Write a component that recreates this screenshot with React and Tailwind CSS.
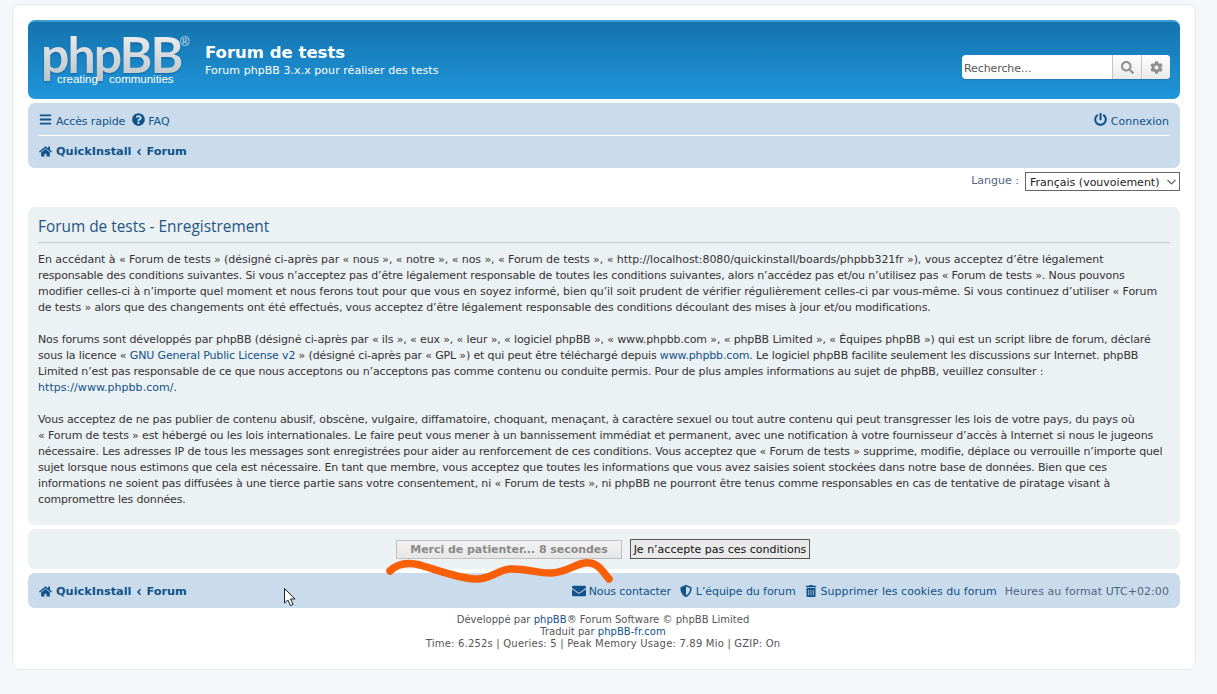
import React from "react";
import { FaBars, FaQuestionCircle, FaHome, FaPowerOff, FaSearch, FaCog, FaEnvelope, FaShieldAlt, FaTrashAlt, FaAngleLeft } from "react-icons/fa";

const P1 = [
  ["En accédant à « Forum de tests » (désigné ci-après par « nous », « notre », « nos », « Forum de tests », « http://localhost:8080/quickinstall/boards/phpbb321fr »), vous acceptez d’être légalement", "tracking-[-0.0625px]"],
  ["responsable des conditions suivantes. Si vous n’acceptez pas d’être légalement responsable de toutes les conditions suivantes, alors n’accédez pas et/ou n’utilisez pas « Forum de tests ». Nous pouvons", "tracking-[-0.15px]"],
  ["modifier celles-ci à n’importe quel moment et nous ferons tout pour que vous en soyez informé, bien qu’il soit prudent de vérifier régulièrement celles-ci par vous-même. Si vous continuez d’utiliser « Forum", "tracking-[-0.09px]"],
  ["de tests » alors que des changements ont été effectués, vous acceptez d’être légalement responsable des conditions découlant des mises à jour et/ou modifications.", "tracking-[-0.127px]"],
];
const P3 = [
  ["Vous acceptez de ne pas publier de contenu abusif, obscène, vulgaire, diffamatoire, choquant, menaçant, à caractère sexuel ou tout autre contenu qui peut transgresser les lois de votre pays, du pays où", "tracking-[-0.125px]"],
  ["« Forum de tests » est hébergé ou les lois internationales. Le faire peut vous mener à un bannissement immédiat et permanent, avec une notification à votre fournisseur d’accès à Internet si nous le jugeons", "tracking-[-0.122px]"],
  ["nécessaire. Les adresses IP de tous les messages sont enregistrées pour aider au renforcement de ces conditions. Vous acceptez que « Forum de tests » supprime, modifie, déplace ou verrouille n’importe quel", "tracking-[-0.14px]"],
  ["sujet lorsque nous estimons que cela est nécessaire. En tant que membre, vous acceptez que toutes les informations que vous avez saisies soient stockées dans notre base de données. Bien que ces", "tracking-[-0.15px]"],
  ["informations ne soient pas diffusées à une tierce partie sans votre consentement, ni « Forum de tests », ni phpBB ne pourront être tenus comme responsables en cas de tentative de piratage visant à", "tracking-[-0.143px]"],
  ["compromettre les données.", "tracking-[-0.16px]"],
];

function Line({ children, className = "" }) {
  return <div className={"whitespace-nowrap " + className}>{children}</div>;
}

function Crumbs({ className = "" }) {
  return (
    <div className={"flex items-center ml-[1px] text-[11.3px] font-bold text-[#105289] " + className}>
      <FaHome className="text-[13px] mr-[4px]" />
      <span>QuickInstall</span>
      <FaAngleLeft className="text-[10px] mx-[2.5px]" />
      <span>Forum</span>
    </div>
  );
}

function Logo() {
  return (
    <div className="relative w-[150px] h-[50px] shrink-0 select-none" style={{ fontFamily: '"Lato", sans-serif' }}>
      <div className="absolute left-[-2px] top-[-18px] text-[50px] leading-[60px] tracking-[-1.9px] font-bold bg-gradient-to-b from-[#f6f6f6] to-[#b9c0c6] bg-clip-text text-transparent whitespace-nowrap drop-shadow-[0_1px_1px_rgba(0,40,80,0.35)]">
        phpBB
      </div>
      <div className="absolute left-[14px] top-[30px] text-[11.5px] leading-[14px] text-white whitespace-nowrap" style={{ fontFamily: '"Liberation Sans", sans-serif' }}>creating</div>
      <div className="absolute left-[66px] top-[30px] text-[11.5px] leading-[14px] text-white whitespace-nowrap" style={{ fontFamily: '"Liberation Sans", sans-serif' }}>communities</div>
      <div className="absolute left-[137px] top-[-7px] text-[13px] leading-[13px] text-[#d8e2ea]" style={{ fontFamily: '"Liberation Sans", sans-serif' }}>®</div>
    </div>
  );
}

export default function App() {
  return (
    <div className="relative h-[694px] overflow-hidden bg-[#f5f7fa] pt-[4px] pl-[12px] pr-[21px] text-[11px] leading-[16px] text-[#333333]" style={{ fontFamily: '"DejaVu Sans", Verdana, sans-serif' }}>
      <div className="h-[666px] bg-white border border-[#e6e9ed] rounded-[8px] px-[15px] pt-[15px]">
        {/* header */}
        <div className="h-[79px] rounded-[7px] bg-gradient-to-b from-[#1474ad] to-[#2096dc] border-t-2 border-[#3a9bd0] flex items-start pl-[15px] pr-[10px] pt-[20px] text-white">
          <Logo />
          <div className="ml-[12px] mt-[1px]">
            <div className="text-[16.5px] leading-[20px] font-bold">Forum de tests</div>
            <div className="mt-[1px] text-[11px] leading-[13px] tracking-[0.05px]">Forum phpBB 3.x.x pour réaliser des tests</div>
          </div>
          <div className="ml-auto mt-[13px] flex h-[24px] w-[208px] bg-white rounded-[4px] shadow-[0_1px_1px_rgba(0,0,0,0.15)] text-[#555]">
            <div className="flex-1 pl-[2px] text-[11px] leading-[28px] tracking-[-0.1px] text-[#555]">Recherche…</div>
            <div className="w-[29px] border-l border-[#c7c3bf] bg-gradient-to-b from-white to-[#e9e9e9] flex items-center justify-center text-[#8f8f8f]"><FaSearch className="text-[13px]" /></div>
            <div className="w-[29px] border-l border-[#c7c3bf] rounded-r-[4px] bg-gradient-to-b from-white to-[#e9e9e9] flex items-center justify-center text-[#8f8f8f]"><FaCog className="text-[13px]" /></div>
          </div>
        </div>

        {/* navbar */}
        <div className="mt-[4px] h-[65px] rounded-[7px] bg-[#cadceb] px-[10px] text-[#105289]">
          <div className="h-[33px] border-b border-white flex items-center">
            <FaBars className="text-[13px] ml-[1px] mr-[4px]" />
            <span className="mt-[6px] tracking-[-0.1px]">Accès rapide</span>
            <FaQuestionCircle className="text-[13px] ml-[7px] mr-[3px]" />
            <span className="mt-[6px]">FAQ</span>
            <FaPowerOff className="text-[13px] ml-auto mr-[4px]" />
            <span className="mt-[6px] mr-[1px]">Connexion</span>
          </div>
          <div className="h-[30px] flex items-center"><Crumbs className="mt-[1px]" /></div>
        </div>

        {/* language */}
        <div className="mt-[4px] h-[19px] flex justify-end items-center">
          <span className="text-[#536482] mr-[6px] -mt-[1px]">Langue :</span>
          <div className="w-[155px] h-[19px] border border-[#666] bg-white text-[11px] leading-[17px] text-[#222] pl-[4px] flex items-center justify-between pr-[3px]">
            <span className="whitespace-nowrap mt-[1px]">Français (vouvoiement)</span>
            <svg width="9" height="6" viewBox="0 0 9 6" fill="none" stroke="#666" strokeWidth="1.2"><path d="M0.5 1l4 4 4-4" /></svg>
          </div>
        </div>

        {/* panel */}
        <div className="mt-[16px] h-[318px] rounded-[7px] bg-[#ecf1f3] px-[10px] pt-[5px]">
          <h2 className="text-[15.4px] leading-[29px] text-[#1f5485] border-b border-[#c5c9cc] h-[31px] mb-[9px]" style={{ fontFamily: '"Open Sans", sans-serif' }}>Forum de tests - Enregistrement</h2>
          <div className="text-[11px] leading-[16px] text-[#333]">
            {P1.map(([l, c]) => <Line key={l} className={c}>{l}</Line>)}
            <div className="h-[16px]" />
            <Line className="tracking-[-0.127px]">Nos forums sont développés par phpBB (désigné ci-après par « ils », « eux », « leur », « logiciel phpBB », « www.phpbb.com », « phpBB Limited », « Équipes phpBB ») qui est un script libre de forum, déclaré</Line>
            <Line className="tracking-[-0.145px]">sous la licence « <span className="text-[#105289]">GNU General Public License v2</span> » (désigné ci-après par « GPL ») et qui peut être téléchargé depuis <span className="text-[#105289]">www.phpbb.com</span>. Le logiciel phpBB facilite seulement les discussions sur Internet. phpBB</Line>
            <Line className="tracking-[-0.146px]">Limited n’est pas responsable de ce que nous acceptons ou n’acceptons pas comme contenu ou conduite permis. Pour de plus amples informations au sujet de phpBB, veuillez consulter :</Line>
            <Line className="tracking-[0.05px]"><span className="text-[#105289]">https://www.phpbb.com/</span>.</Line>
            <div className="h-[16px]" />
            {P3.map(([l, c]) => <Line key={l} className={c}>{l}</Line>)}
          </div>
        </div>

        {/* buttons */}
        <div className="mt-[4px] h-[40px] rounded-[7px] bg-[#ecf1f3] flex items-start justify-center pt-[10px] pr-[2px]">
          <div className="w-[226px] h-[19px] mt-[1px] border border-[#c0c0c0] bg-gradient-to-b from-[#f2f2f2] to-[#e6e6e6] text-[11px] leading-[17px] font-bold text-[#8a8a8a] text-center tracking-[-0.05px]">Merci de patienter... 8 secondes</div>
          <div className="ml-[8px] w-[180px] h-[20px] border border-[#555] bg-[#e9e9e9] text-[11px] leading-[19px] text-[#111] text-center whitespace-nowrap">Je n’accepte pas ces conditions</div>
        </div>

        {/* footer nav */}
        <div className="mt-[4px] h-[35px] rounded-[7px] bg-[#cadceb] px-[10px] flex items-center text-[#105289]">
          <Crumbs className="mt-[2px]" />
          <div className="ml-auto mr-[1px] flex items-center whitespace-nowrap">
            <FaEnvelope className="text-[14px] mr-[3px]" />
            <span className="mt-[2px] tracking-[-0.1px]">Nous contacter</span>
            <FaShieldAlt className="text-[12px] ml-[9px] mr-[4px]" />
            <span className="mt-[2px] tracking-[-0.07px]">L’équipe du forum</span>
            <FaTrashAlt className="text-[12px] ml-[9px] mr-[4px]" />
            <span className="mt-[2px] tracking-[0.03px]">Supprimer les cookies du forum</span>
            <span className="mt-[2px] ml-[8px] text-[#536482] tracking-[0.07px]">Heures au format UTC+02:00</span>
          </div>
        </div>

        {/* copyright */}
        <div className="mt-[6px] pr-[2px] text-center text-[10px] leading-[12px] text-[#555]">
          <div className="tracking-[0.03px]">Développé par <span className="text-[#105289]">phpBB</span>® Forum Software © phpBB Limited</div>
          <div className="tracking-[0.03px]">Traduit par <span className="text-[#105289]">phpBB-fr.com</span></div>
          <div className="tracking-[0.2px]">Time: 6.252s | Queries: 5 | Peak Memory Usage: 7.89 Mio | GZIP: On</div>
        </div>
      </div>

      {/* scribble overlay */}
      <svg className="absolute left-0 top-0 pointer-events-none" width="1217" height="694" viewBox="0 0 1217 694" fill="none">
        <path d="M390 571C398 563 408 562 420 565C440 571 458 578 475 579C490 580 497 570 510 569C525 568 540 574 552 573C570 572 578 561 590 563C599 564 604 573 609 579" stroke="#f85f06" strokeWidth="7.5" strokeLinecap="round" strokeLinejoin="round" />
        <path d="M284.5 588.5V603l3.4-3 2.6 5.6 2.6-1.2-2.6-5.4h4.6z" fill="#fff" stroke="#222" strokeWidth="1" />
      </svg>
    </div>
  );
}
